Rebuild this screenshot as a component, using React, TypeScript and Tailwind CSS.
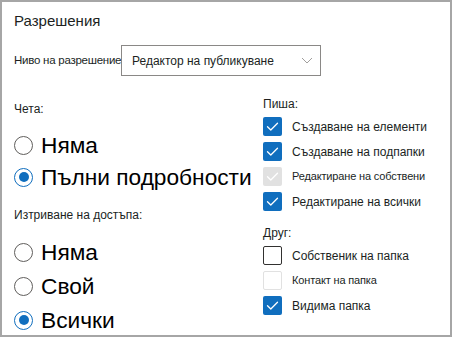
import React from 'react';

const font = { fontFamily: '"Liberation Sans", Arial, sans-serif' };

function Check({ color = 'white' }: { color?: string }) {
  return (
    <svg width="19" height="19" viewBox="0 0 19 19" fill="none">
      <path d="M4.5 9.8 L7.8 13 L14.5 6.3" stroke={color} strokeWidth="1.3" strokeLinecap="round" strokeLinejoin="round" />
    </svg>
  );
}

type BoxState = 'on' | 'off' | 'disabled-on' | 'disabled-off';

function CheckRow({ label, state, small }: { label: string; state: BoxState; small?: boolean }) {
  const box =
    state === 'on'
      ? 'bg-[#106ebe]'
      : state === 'disabled-on'
        ? 'bg-[#e1e1e1]'
        : state === 'off'
          ? 'border border-[#323130] bg-white'
          : 'border border-[#e1e1e1] bg-white';
  return (
    <div className="flex h-[25px] items-center">
      <div className={`h-[19px] w-[19px] shrink-0 rounded-[2px] ${box}`}>
        {(state === 'on' || state === 'disabled-on') && <Check />}
      </div>
      <span
        className={`ml-[10px] whitespace-nowrap text-[#201f1e] ${
          small ? 'text-[11px] tracking-[-0.15px]' : 'text-[12px]'
        }`}
      >
        {label}
      </span>
    </div>
  );
}

function RadioRow({ label, checked, h }: { label: string; checked?: boolean; h: string }) {
  return (
    <div className={`flex items-center ${h}`}>
      <div
        className={`flex h-[19px] w-[19px] shrink-0 items-center justify-center rounded-full border ${
          checked ? 'border-[#106ebe]' : 'border-[#605e5c]'
        }`}
      >
        {checked && <div className="h-[10px] w-[10px] rounded-full bg-[#106ebe]" />}
      </div>
      <span className="ml-[8px] whitespace-nowrap text-[22.7px] leading-none text-black">{label}</span>
    </div>
  );
}

export default function App() {
  return (
    <div style={font} className="relative h-[337px] w-[452px] overflow-hidden border-2 border-[#a6a6a6] bg-white">
      <div className="flex flex-col pl-[12px]">
        <h1 className="mt-[9px] text-[15px] leading-[20px] text-[#201f1e]">Разрешения</h1>

        <div className="mt-[14px] flex h-[31px] items-center">
          <span className="w-[107px] shrink-0 whitespace-nowrap text-[11.5px] tracking-[-0.25px] text-[#201f1e]">
            Ниво на разрешение
          </span>
          <div className="flex h-[31px] w-[200px] shrink-0 items-center border border-[#8a8886]">
            <span className="ml-[10px] grow whitespace-nowrap text-[12px] text-[#201f1e]">Редактор на публикуване</span>
            <svg className="mr-[7px] shrink-0" width="12" height="7" viewBox="0 0 12 7" fill="none">
              <path d="M1 1 L6 6 L11 1" stroke="#a19f9d" strokeWidth="1" />
            </svg>
          </div>
        </div>

        <div className="grid grid-cols-[249px_1fr]">
          <div className="flex flex-col">
            <span className="mt-[23px] text-[12px] leading-[20px] text-[#201f1e]">Чета:</span>
            <div className="mt-[10px]">
              <RadioRow label="Няма" h="h-[32px]" />
              <RadioRow label="Пълни подробности" checked h="h-[32px]" />
            </div>
            <span className="mt-[12px] text-[12px] leading-[20px] text-[#201f1e]">Изтриване на достъпа:</span>
            <div className="mt-[10px]">
              <RadioRow label="Няма" h="h-[34px]" />
              <RadioRow label="Свой" h="h-[34px]" />
              <RadioRow label="Всички" checked h="h-[34px]" />
            </div>
          </div>

          <div className="flex flex-col">
            <span className="mt-[18px] text-[12px] leading-[20px] text-[#201f1e]">Пиша:</span>
            <CheckRow label="Създаване на елементи" state="on" />
            <CheckRow label="Създаване на подпапки" state="on" />
            <CheckRow label="Редактиране на собствени" state="disabled-on" small />
            <CheckRow label="Редактиране на всички" state="on" />
            <span className="mt-[9px] text-[12px] leading-[20px] text-[#201f1e]">Друг:</span>
            <CheckRow label="Собственик на папка" state="off" />
            <CheckRow label="Контакт на папка" state="disabled-off" small />
            <CheckRow label="Видима папка" state="on" />
          </div>
        </div>
      </div>
    </div>
  );
}
